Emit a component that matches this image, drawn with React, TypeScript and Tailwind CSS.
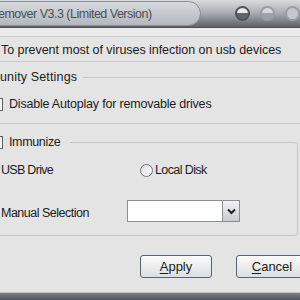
import React from "react";

function CheckBox() {
  return (
    <span className="inline-block w-[13px] h-[13px] border border-[#5a6068] bg-gradient-to-br from-[#dfe3e8] to-[#ffffff] shrink-0" />
  );
}

function Radio() {
  return (
    <span className="inline-block w-[13px] h-[13px] rounded-full border border-[#6f757c] bg-gradient-to-br from-[#d9dde2] to-[#ffffff] shrink-0" />
  );
}

export default function App() {
  return (
    <div className="w-[300px] h-[300px] overflow-hidden bg-[#e4e4e4] text-[#1c1c1c] text-[12.5px] font-['Liberation_Sans',sans-serif] flex flex-col">
      {/* title bar */}
      <div className="h-[28px] shrink-0 flex items-center bg-gradient-to-b from-[#d9dbde] via-[#a7abb1] to-[#5e6268] border-b border-[#4c5056]">
        <div className="w-[220px] h-[25px] -ml-[2px] rounded-r-[13px] border border-[#8a8e94] bg-gradient-to-b from-[#d6d9dd] to-[#b4b8be] flex items-center">
          <span className="text-[#4b5057] text-[12.5px] tracking-[-0.5px] -ml-[1px] pt-[2px]">emover V3.3 (Limited Version)</span>
        </div>
        <div className="flex items-center gap-[10px] ml-[34px]">
          <span className="w-[15px] h-[15px] rounded-full border-[2px] border-[#4f545b] bg-gradient-to-b from-[#e8eaec] from-50% to-[#60656c] to-50%" />
          <span className="w-[15px] h-[15px] rounded-full border-[2px] border-[#9a9ea4] bg-gradient-to-b from-[#d6d8db] from-50% to-[#9ea2a8] to-50%" />
          <span className="w-[15px] h-[15px] rounded-full border-[2px] border-[#9a9ea4] bg-[#c5c8cc]" />
        </div>
      </div>

      {/* menu strip */}
      <div className="h-[9px] shrink-0 bg-[#ebebeb] border-b border-[#cdcdcd]" />

      {/* description */}
      <div className="h-[25px] shrink-0 flex items-center pl-[1px] pt-[2px] tracking-[-0.05px] border-b border-[#c9c9c9]">
        To prevent most of viruses infection on usb devices
      </div>

      {/* immunity settings */}
      <div className="shrink-0 border-b border-[#c9c9c9] pb-[7px]">
        <div className="h-[30px] flex items-center">
          <span className="tracking-[0.15px]">unity Settings</span>
          <span className="flex-1 ml-[6px] h-px bg-[#c9c9c9]" />
        </div>
        <div className="h-[24px] flex items-center gap-[6px] -ml-[10px]">
          <CheckBox />
          <span className="tracking-[-0.2px]">Disable Autoplay for removable drives</span>
        </div>
      </div>

      {/* immunize group */}
      <div className="shrink-0 mt-[10px] mr-[2px]">
        <div className="h-[16px] flex items-center -ml-[10px]">
          <CheckBox />
          <span className="ml-[6px] tracking-[-0.35px]">Immunize</span>
          <span className="flex-1 ml-[10px] self-end h-[8px] border-t border-r border-[#c6c6c6] rounded-tr-[4px]" />
        </div>
        <div className="border-r border-b border-[#c6c6c6] rounded-br-[4px] pt-[8px] pb-[13px]">
          <div className="h-[24px] flex items-center">
            <span className="w-[140px] pl-[1px] tracking-[-0.7px]">USB Drive</span>
            <Radio />
            <span className="ml-[2px] tracking-[-0.6px]">Local Disk</span>
          </div>
          <div className="h-[22px] mt-[18px] flex items-center">
            <span className="w-[127px] pl-[1px] pt-[4px] tracking-[-0.5px]">Manual Selection</span>
            <div className="w-[113px] h-[22px] border border-[#8a8f96] bg-white flex justify-end">
              <div className="w-[17px] h-full border-l border-[#8a8f96] bg-gradient-to-b from-[#f2f3f4] to-[#c9ccd0] flex items-center justify-center">
                <svg width="9" height="7" viewBox="0 0 9 7">
                  <path d="M1 1.5 L4.5 5 L8 1.5" fill="none" stroke="#1f2328" strokeWidth="2" />
                </svg>
              </div>
            </div>
          </div>
        </div>
      </div>

      {/* buttons */}
      <div className="shrink-0 mt-[19px] flex gap-[24px] pl-[140px]">
        <button className="w-[72px] h-[23px] shrink-0 rounded-[3px] border border-[#566575] bg-gradient-to-b from-[#fbfbfb] to-[#dcdee1] text-[13px]">
          <span className="underline underline-offset-2">A</span>pply
        </button>
        <button className="w-[72px] h-[23px] shrink-0 rounded-[3px] border border-[#566575] bg-gradient-to-b from-[#fbfbfb] to-[#dcdee1] text-[13px]">
          <span className="underline underline-offset-2">C</span>ancel
        </button>
      </div>

      {/* bottom frame */}
      <div className="mt-[14px] flex-1 bg-gradient-to-b from-[#7d8187] to-[#4f5359] border-t border-[#c2c4c7]" />
    </div>
  );
}
